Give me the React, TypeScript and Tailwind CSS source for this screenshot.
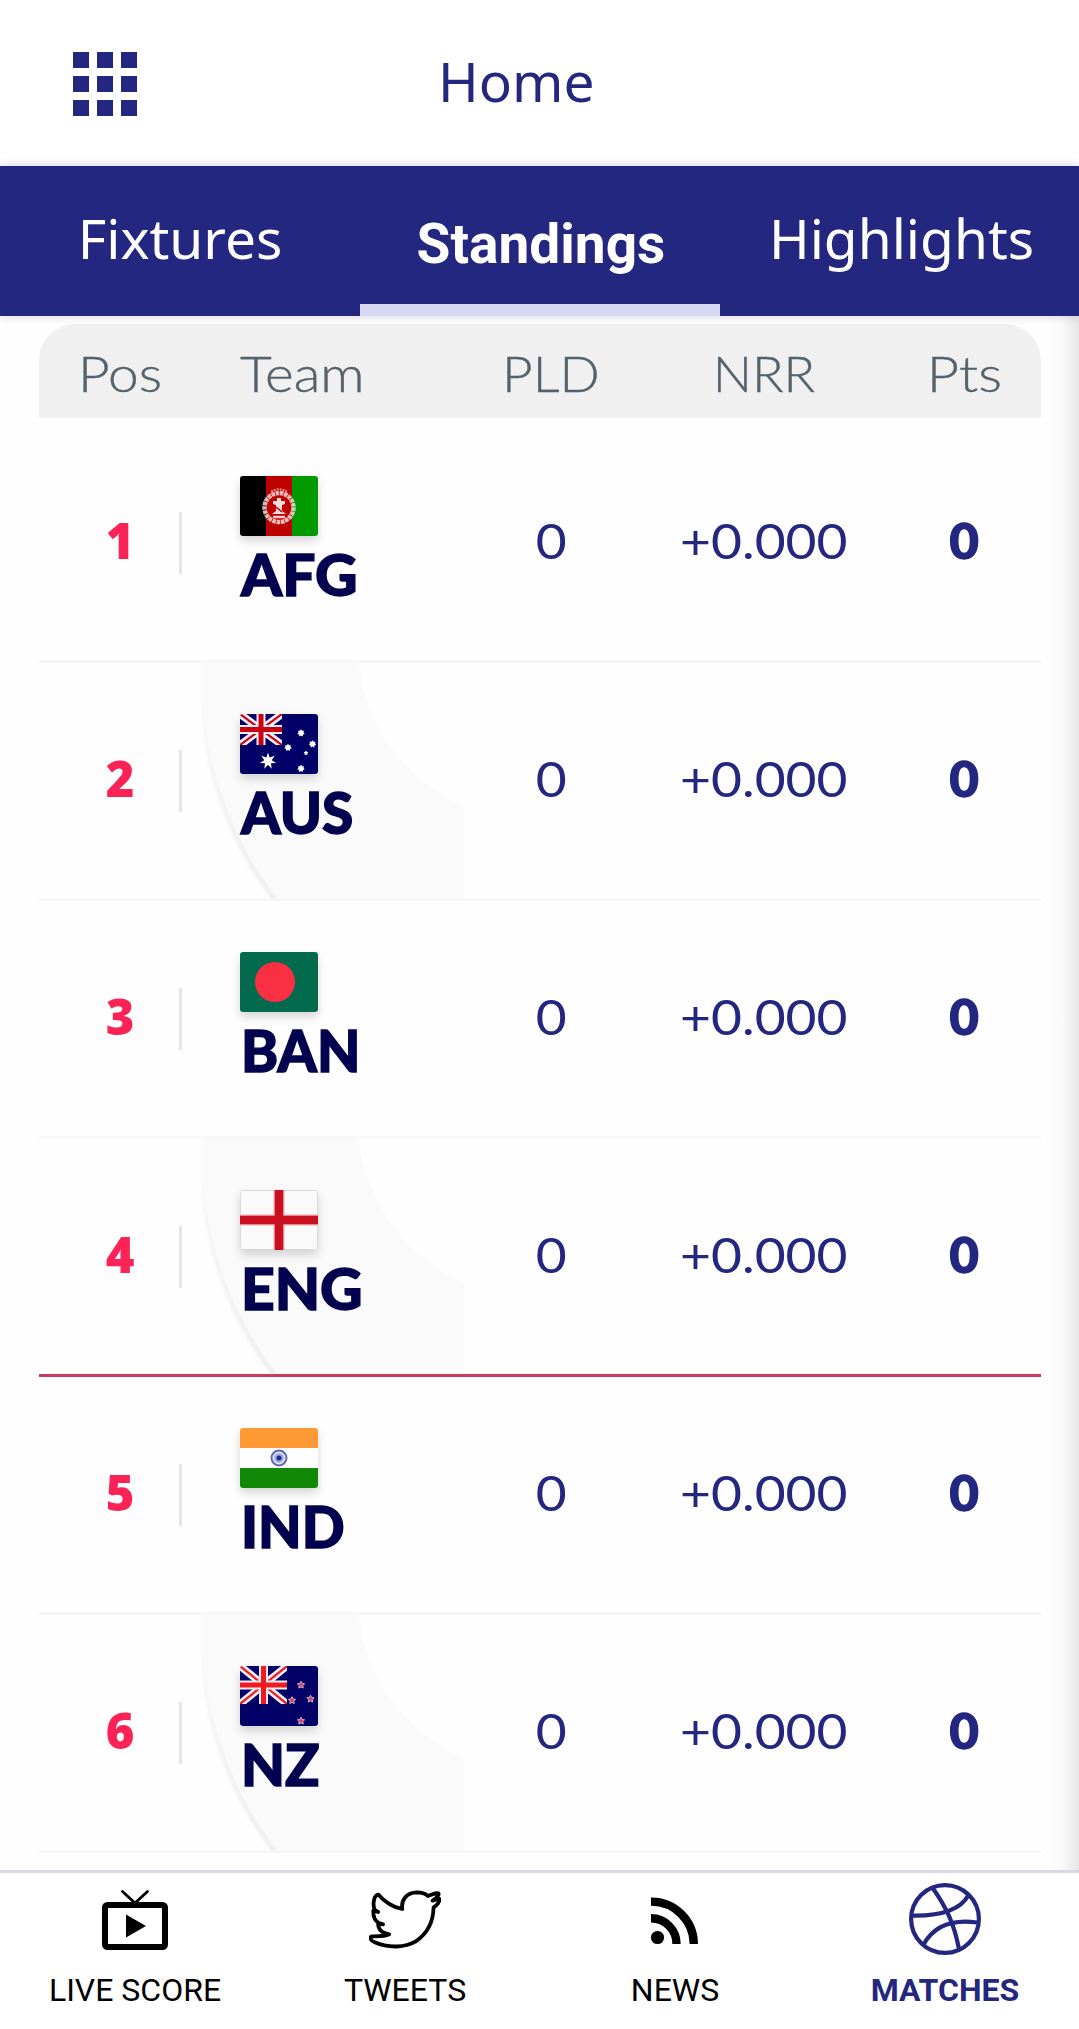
import type { ReactNode } from "react";

const starPoints = (cx: number, cy: number, outer: number, inner: number, tips: number) =>
  Array.from({ length: tips * 2 }, (_, i) => {
    const r = i % 2 === 0 ? outer : inner;
    const a = (Math.PI * i) / tips - Math.PI / 2;
    return `${(cx + r * Math.cos(a)).toFixed(2)},${(cy + r * Math.sin(a)).toFixed(2)}`;
  }).join(" ");

function UnionJack({ w, h, red }: { w: number; h: number; red: string }) {
  return (
    <svg x="0" y="0" width={w} height={h} viewBox={`0 0 ${w} ${h}`}>
      <path d={`M0 0L${w} ${h}M${w} 0L0 ${h}`} stroke="#f4eef4" strokeWidth="7.5" />
      <path d={`M0 0L${w} ${h}M${w} 0L0 ${h}`} stroke={red} strokeWidth="2.2" />
      <path d={`M${w / 2} 0V${h}M0 ${h / 2}H${w}`} stroke="#f4eef4" strokeWidth="9" />
      <path d={`M${w / 2} 0V${h}M0 ${h / 2}H${w}`} stroke={red} strokeWidth="5" />
    </svg>
  );
}

const flags: Record<string, ReactNode> = {
  AFG: (
    <>
      <rect width="26" height="60" fill="#000" />
      <rect x="26" width="26" height="60" fill="#bf0000" />
      <rect x="52" width="26" height="60" fill="#009a00" />
      <circle cx="39" cy="31.5" r="14.5" fill="none" stroke="#f3d9d9" strokeWidth="4.5" strokeDasharray="3.6 .7" opacity=".85" />
      <path d="M31 15.500Q39 11 47 15.500" fill="none" stroke="#e09090" strokeWidth="2" strokeDasharray="2 1" />
      <path d="M37 22h4v3h4v3l-3 1v6l4 3H32l4-3v-6l-3-1v-3h4z" fill="#f3dcdc" />
      <path d="M36 31l6 5" stroke="#bf0000" strokeWidth="1.5" />
      <path d="M33 41h12" stroke="#eecccc" strokeWidth="2.500" />
    </>
  ),
  AUS: (
    <>
      <rect width="78" height="60" fill="#000066" />
      <UnionJack w={42} h={31} red="#cc0010" />
      <polygon points={starPoints(28, 47, 8.5, 3.8, 7)} fill="#fff" />
      <polygon points={starPoints(61, 19, 3.8, 2.6, 7)} fill="#fff" />
      <polygon points={starPoints(72.5, 30, 3.8, 2.6, 7)} fill="#fff" />
      <polygon points={starPoints(48, 33.5, 3.8, 2.6, 7)} fill="#fff" />
      <polygon points={starPoints(61, 54.5, 3.8, 2.6, 7)} fill="#fff" />
      <polygon points={starPoints(66, 39, 2.4, 1.4, 5)} fill="#fff" />
    </>
  ),
  BAN: (
    <>
      <rect width="78" height="60" fill="#046a4e" />
      <circle cx="35" cy="30" r="20" fill="#f92f43" />
    </>
  ),
  ENG: (
    <>
      <rect width="78" height="60" fill="#fafafa" />
      <rect x=".5" y=".5" width="77" height="59" rx="2" fill="none" stroke="#d5dae0" />
      <path d="M39 0V60M0 30H78" stroke="#f3b0b0" strokeWidth="11" />
      <path d="M39 0V60M0 30H78" stroke="#c81020" strokeWidth="8.500" />
    </>
  ),
  IND: (
    <>
      <rect width="78" height="20" fill="#ff9933" />
      <rect y="20" width="78" height="20" fill="#fff" />
      <rect y="40" width="78" height="20" fill="#128807" />
      <circle cx="39" cy="30" r="7.500" fill="#dfe3f4" stroke="#6069b0" strokeWidth="2" />
      <circle cx="39" cy="30" r="4.800" fill="#a3abd9" />
      <circle cx="39" cy="30" r="2.500" fill="#1c2a92" />
    </>
  ),
  NZ: (
    <>
      <rect width="78" height="60" fill="#000066" />
      <UnionJack w={47} h={38} red="#f01a20" />
      {[
        [61, 19],
        [52, 34.5],
        [70.5, 33],
        [61, 55],
      ].map(([x, y]) => (
        <polygon key={`${x}-${y}`} points={starPoints(x, y, 3.8, 1.9, 5)} fill="#e0405a" stroke="#c9b4d4" strokeWidth="1" />
      ))}
    </>
  ),
};

const teams = [
  { code: "AFG", name: "scale-x-[1.03]" },
  { code: "AUS", name: "scale-x-[0.995]" },
  { code: "BAN", name: "scale-x-[0.985]" },
  { code: "ENG", name: "scale-x-[1.03]" },
  { code: "IND", name: "scale-x-[0.99]" },
  { code: "NZ", name: "scale-x-100" },
];

const columns = "grid grid-cols-[162px_263px_174px_252px_151px]";

function RowArc() {
  return (
    <svg className="absolute top-0 left-0 h-[235px] w-[263px]" viewBox="201 663 263 235">
      <defs>
        <linearGradient id="edge" x1="0" y1="0" x2="0" y2="1">
          <stop offset="0.1" stopColor="#f9f9f9" />
          <stop offset="1" stopColor="#ededed" />
        </linearGradient>
        <filter id="soft">
          <feGaussianBlur stdDeviation="1.5" />
        </filter>
      </defs>
      <path d="M203 663V680A345 345 0 0 0 277 902" fill="none" stroke="url(#edge)" strokeWidth="5" filter="url(#soft)" />
      <path d="M202 663V680A347 347 0 0 0 280 898H464V807A182 182 0 0 1 358.500 663Z" fill="#fafafa" />
    </svg>
  );
}

function TeamRow({ code, name, index }: { code: string; name: string; index: number }) {
  const rule = index === 3 ? "border-[#c93a5e]" : "border-[#f7f7f7]";
  return (
    <div className={`${columns} mr-[-1px] h-[238px] border-b-[3px] ${rule}`}>
      <div className="flex items-center">
        <span className="w-[140px] pr-[-1px] pb-1 pl-[22px] text-center font-['Open_Sans'] text-[49px] leading-none font-extrabold text-[#fb2355]">
          {index + 1}
        </span>
        <span className="h-[62px] w-[3px] shrink-0 bg-[#e4e4e4]" />
      </div>
      <div className="relative pt-[51px] pl-[39px]">
        {index % 2 === 1 && <RowArc />}
        <svg
          className="relative h-[60px] w-[78px] rounded-[3px] shadow-[0_5px_10px_rgba(0,0,0,0.16)]"
          viewBox="0 0 78 60"
        >
          {flags[code]}
        </svg>
        <div
          className={`mt-[9px] ml-px w-fit origin-left text-[57px] leading-[58px] font-black text-[#02024e] [-webkit-text-stroke:1.4px_#02024e] ${name}`}
        >
          {code}
        </div>
      </div>
      <div className="flex items-center justify-center pb-1 pl-px text-[49px] text-[#232780]">
        <span className="scale-x-[1.09]">0</span>
      </div>
      <div className="flex items-center justify-center pb-1 text-[49px] text-[#232780]">
        <span className="scale-x-[1.09]">+0.000</span>
      </div>
      <div className="flex items-center justify-center pr-0.5 pb-1 text-[49px] font-black text-[#232780] [-webkit-text-stroke:1.4px_#232780]">
        <span className="scale-x-[1.03]">0</span>
      </div>
    </div>
  );
}

function TvIcon() {
  return (
    <svg className="h-[72px] w-[72px]" viewBox="99 1883 72 72">
      <rect x="105" y="1905" width="60" height="42" rx="2.500" fill="none" stroke="#000" strokeWidth="6" />
      <path d="M126 1914.500L146 1926L126 1937.500Z" />
      <path d="M122.500 1891.500L135 1903L147.500 1891.500" fill="none" stroke="#000" strokeWidth="2.800" strokeLinecap="round" />
    </svg>
  );
}

function BirdIcon() {
  return (
    <svg className="h-[72px] w-[72px]" viewBox="369 1883 72 72">
      <g transform="translate(0 1830) scale(.3444 .3333)">
        <path
          d="M1080 319C1072 323 1076 332 1088 337C1130 356 1178 352 1206 335C1242 311 1258 275 1259 232C1270 225 1278 214 1275 206L1256 212C1272 202 1275 192 1273 190C1264 188 1256 194 1243 198C1233 189 1222 187 1210 187C1180 188 1164 210 1168 237C1140 231 1118 217 1099 194C1086 194 1081 222 1088 240L1098 246L1084 242C1083 260 1090 273 1100 279L1112 283L1098 281C1098 298 1108 309 1130 313C1116 320 1095 319 1080 319Z"
          fill="none"
          stroke="#000"
          strokeWidth="3.800"
          strokeLinejoin="round"
          vectorEffect="non-scaling-stroke"
        />
      </g>
    </svg>
  );
}

function FeedIcon() {
  return (
    <svg className="h-[72px] w-[72px]" viewBox="639 1883 72 72">
      <circle cx="657.5" cy="1937.5" r="6.600" />
      <path d="M651 1901.600A42.500 42.500 0 0 1 693.800 1944M651 1918.300A25.500 25.500 0 0 1 676.500 1944" fill="none" stroke="#000" strokeWidth="8.400" />
    </svg>
  );
}

function BallIcon() {
  return (
    <svg className="h-[72px] w-[72px]" viewBox="0 0 72 72" fill="none" stroke="#232780" strokeWidth="4.200">
      <circle cx="36" cy="36" r="33.900" />
      <path d="M23.700 5C37 24 45 40 50 66" />
      <path d="M4 32.600C32 33 52 26 59.500 12" />
      <path d="M14.300 62C24 44 42 36 68 39.500" />
    </svg>
  );
}

function NavItem({ label, icon, active }: { label: string; icon: ReactNode; active?: boolean }) {
  return (
    <div className="flex flex-col items-center pt-[10px]">
      {icon}
      <span
        className={`mt-4 font-[Roboto] text-[32px] leading-[38px] whitespace-nowrap ${
          active ? "font-bold text-[#232780]" : "text-black"
        }`}
      >
        {label}
      </span>
    </div>
  );
}

export default function App() {
  return (
    <div className="flex h-[2029px] w-[1079px] flex-col overflow-hidden bg-[#fefefe] font-[Lato,sans-serif]">
      <header className="grid h-[166px] shrink-0 grid-cols-[443px_1fr] bg-white">
        <div className="pt-[52px] pl-[73px]">
          <div className="grid w-16 grid-cols-3 gap-2">
            {Array.from({ length: 9 }, (_, i) => (
              <span key={i} className="h-4 bg-[#232780]" />
            ))}
          </div>
        </div>
        <h1 className="-ml-[5px] font-['Noto_Sans'] text-[55px] leading-[162px] text-[#232780]">Home</h1>
      </header>

      <nav className="z-10 grid h-[150px] shrink-0 grid-cols-[360px_360px_359px] bg-[#232780] text-[55px] leading-[144px] text-white shadow-[0_0_9px_rgba(35,39,128,0.22)]">
        <div className="text-center font-['Noto_Sans']">Fixtures</div>
        <div className="border-b-[12px] border-[#d7d9f2] pl-0.5 text-center font-[Roboto] leading-[157px] font-bold">
          <div className="h-[138px]">Standings</div>
        </div>
        <div className="pl-1 text-center font-['Noto_Sans']">Highlights</div>
      </nav>

      <main className="relative h-[1554px] shrink-0 px-[39px] pt-2">
        <div className="absolute inset-y-0 right-0 w-[34px] bg-gradient-to-r from-transparent via-[#fafafa] to-[#e6e6e6]" />
        <div
          className={`${columns} relative mr-[-1px] mb-[7px] h-[94px] rounded-t-[36px] bg-[#f0f0f0] text-[50px] leading-[99px] font-light text-[#54626c] [-webkit-text-stroke:0.4px_#54626c]`}
        >
          <div className="origin-[39px] scale-x-[1.1] pl-[39px]">Pos</div>
          <div className="origin-[39px] scale-x-[1.1] pl-[39px]">Team</div>
          <div className="scale-x-[1.06] text-center">PLD</div>
          <div className="scale-x-[1.04] text-center">NRR</div>
          <div className="scale-x-[1.12] pr-0.5 text-center">Pts</div>
        </div>
        {teams.map((t, i) => (
          <TeamRow key={t.code} code={t.code} name={t.name} index={i} />
        ))}
      </main>

      <footer className="mr-[-1px] grid h-[159px] shrink-0 grid-cols-4 border-t-[3px] border-[#d6d9e2] bg-white">
        <NavItem label="LIVE SCORE" icon={<TvIcon />} />
        <NavItem label="TWEETS" icon={<BirdIcon />} />
        <NavItem label="NEWS" icon={<FeedIcon />} />
        <NavItem label="MATCHES" icon={<BallIcon />} active />
      </footer>
    </div>
  );
}
